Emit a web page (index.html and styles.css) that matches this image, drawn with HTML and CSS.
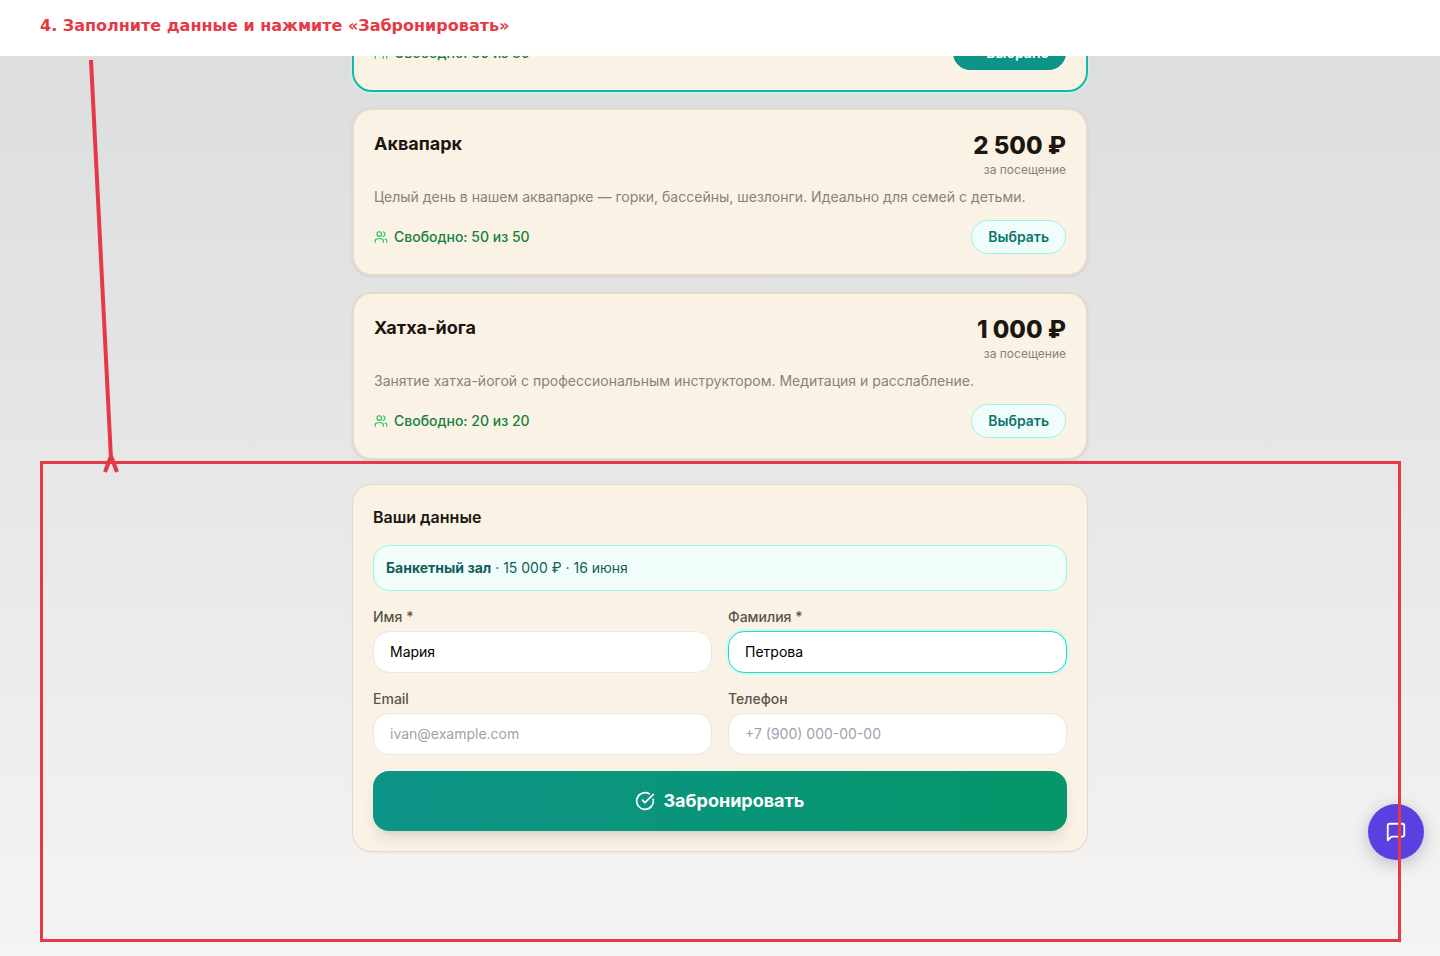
FILE: index.html
```html
<!DOCTYPE html>
<html lang="ru">
<head>
<meta charset="utf-8">
<meta name="viewport" content="width=device-width, initial-scale=1">
<title>Бронирование</title>
<link rel="stylesheet" href="styles.css">
</head>
<body>
<svg class="sprite" aria-hidden="true">
  <symbol id="users" viewBox="0 0 24 24"><path d="M16 21v-2a4 4 0 0 0-4-4H6a4 4 0 0 0-4 4v2"/><circle cx="9" cy="7" r="4"/><path d="M22 21v-2a4 4 0 0 0-3-3.87M16 3.13a4 4 0 0 1 0 7.75"/></symbol>
</svg>
<header class="step"><h1 class="step-title">4. Заполните данные и нажмите «Забронировать»</h1></header>
<main class="stage">
  <div class="content">
    <section class="services">
      <article class="card card-selected">
        <div class="card-foot">
          <span class="seats"><svg class="icon-sm"><use href="#users"/></svg>Свободно: 30 из 30</span>
          <button class="pick pick-active" type="button"><svg class="icon-xs" viewBox="0 0 24 24"><path d="M20 6 9 17l-5-5"/></svg>Выбрано</button>
        </div>
      </article>
      <article class="card">
        <div class="card-head">
          <h2 class="card-title">Аквапарк</h2>
          <div class="cost"><div class="price">2&nbsp;500 ₽</div><div class="unit">за посещение</div></div>
        </div>
        <p class="about">Целый день в нашем аквапарке — горки, бассейны, шезлонги. Идеально для семей с детьми.</p>
        <div class="card-foot">
          <span class="seats"><svg class="icon-sm"><use href="#users"/></svg>Свободно: 50 из 50</span>
          <button class="pick" type="button">Выбрать</button>
        </div>
      </article>
      <article class="card">
        <div class="card-head">
          <h2 class="card-title">Хатха-йога</h2>
          <div class="cost"><div class="price">1&nbsp;000 ₽</div><div class="unit">за посещение</div></div>
        </div>
        <p class="about">Занятие хатха-йогой с профессиональным инструктором. Медитация и расслабление.</p>
        <div class="card-foot">
          <span class="seats"><svg class="icon-sm"><use href="#users"/></svg>Свободно: 20 из 20</span>
          <button class="pick" type="button">Выбрать</button>
        </div>
      </article>
    </section>
    <form class="form">
      <h2 class="form-title">Ваши данные</h2>
      <p class="summary"><strong>Банкетный зал</strong> · 15&nbsp;000 ₽ · 16 июня</p>
      <div class="fields">
        <div class="field"><label for="name">Имя *</label><input id="name" type="text" value="Мария"></div>
        <div class="field"><label for="surname">Фамилия *</label><input id="surname" class="is-active" type="text" value="Петрова"></div>
        <div class="field"><label for="email">Email</label><input id="email" type="email" placeholder="ivan@example.com"></div>
        <div class="field"><label for="phone">Телефон</label><input id="phone" type="tel" placeholder="+7 (900) 000-00-00"></div>
      </div>
      <button class="submit" type="button"><svg class="icon-md" viewBox="0 0 24 24"><path d="M21.801 10A10 10 0 1 1 17 3.335"/><path d="m9 11 3 3L22 4"/></svg>Забронировать</button>
    </form>
  </div>
</main>
<button class="chat" type="button" aria-label="Чат"><svg class="icon-lg" viewBox="0 0 24 24"><path d="M21 15a2 2 0 0 1-2 2H7l-4 4V5a2 2 0 0 1 2-2h14a2 2 0 0 1 2 2z"/></svg></button>
<div class="highlight"></div>
<svg class="arrow" viewBox="0 0 40 420"><path d="M11 4 31 403M31 400 25 416M31 400 37 416"/></svg>
</body>
</html>
```
FILE: styles.css
```css
* { box-sizing: border-box; margin: 0; }
body {
  position: relative;
  display: flex;
  flex-direction: column;
  height: 100vh;
  overflow: hidden;
  background: #fff;
  color: #1c1611;
  font-family: Inter, "Noto Sans", sans-serif;
  font-size: 14px;
  line-height: 20px;
}
button, input { font: inherit; }
svg { fill: none; stroke: currentColor; stroke-width: 2; stroke-linecap: round; stroke-linejoin: round; flex: none; }
.sprite { position: absolute; width: 0; height: 0; }
.icon-xs { width: 12px; height: 12px; }
.icon-sm { width: 14px; height: 14px; }
.icon-md { width: 20px; height: 20px; }
.icon-lg { width: 22px; height: 22px; }

.step { flex: none; padding: 16px 40px 20px; }
.step-title { color: #e63946; font: 700 16px/20px "DejaVu Sans", sans-serif; }

.stage {
  flex: 1;
  min-height: 0;
  display: flex;
  flex-direction: column;
  justify-content: flex-end;
  overflow: hidden;
  padding: 0 16px 104px;
  background: linear-gradient(180deg, #dcdfde 0%, #e3e3e3 30%, #f5f4f2 100%);
}
.content { width: 100%; max-width: 736px; margin: 0 auto; }
.services { display: flex; flex-direction: column; gap: 16px; margin-bottom: 24px; }

.card {
  padding: 20px;
  border: 2px solid #e3dccd;
  border-radius: 20px;
  background: #faf3e5;
  box-shadow: 0 1px 3px rgba(0, 0, 0, .08);
}
.card-selected { border-color: #14b8a6; box-shadow: 0 1px 3px #ccfbf1; }
.card-head { display: flex; justify-content: space-between; margin-bottom: 8px; }
.card-title { font-size: 18px; line-height: 28px; font-weight: 700; }
.cost { text-align: right; }
.price { font-size: 24px; line-height: 32px; font-weight: 800; }
.unit { font-size: 12px; line-height: 16px; color: #8a8177; }
.about { margin-bottom: 12px; line-height: 22px; color: #8a8177; }
.card-foot { display: flex; align-items: center; justify-content: space-between; }
.seats { display: flex; align-items: center; gap: 6px; color: #15803d; font-weight: 500; }
.seats svg { color: #22c55e; }
.pick {
  display: flex;
  align-items: center;
  gap: 4px;
  padding: 6px 16px;
  border: 1px solid #99f6e4;
  border-radius: 17px;
  background: #f0fdfa;
  color: #0f766e;
  font-weight: 600;
}
.pick-active { border-color: #0d9488; background: #0d9488; color: #fff; }

.form {
  padding: 20px;
  border: 1px solid #e3dccd;
  border-radius: 20px;
  background: #faf3e5;
  box-shadow: 0 1px 2px rgba(0, 0, 0, .05);
}
.form-title { margin-bottom: 16px; font-size: 16px; line-height: 24px; font-weight: 600; }
.summary {
  margin-bottom: 16px;
  padding: 12px;
  border: 1px solid #99f6e4;
  border-radius: 16px;
  background: #f0fdfa;
  color: #115e59;
}
.fields { display: grid; grid-template-columns: 1fr 1fr; gap: 16px; margin-bottom: 16px; }
.field { display: flex; flex-direction: column; gap: 4px; }
.field label { color: #5c5349; font-weight: 500; }
.field input {
  width: 100%;
  padding: 10px 16px;
  border: 1px solid #e5e7eb;
  border-radius: 16px;
  outline: none;
  background: #fff;
  color: #000;
  line-height: 20px;
}
.field input::placeholder { color: #9ca3af; }
.field .is-active { border-color: #2dd4bf; box-shadow: 0 0 0 2px #ccfbf1; }
.submit {
  display: flex;
  align-items: center;
  justify-content: center;
  gap: 8px;
  width: 100%;
  padding: 16px;
  border: 0;
  border-radius: 16px;
  background: linear-gradient(90deg, #0d9488, #059669);
  box-shadow: 0 10px 15px -3px rgba(0, 0, 0, .1), 0 4px 6px -4px rgba(0, 0, 0, .1);
  color: #fff;
  font-size: 18px;
  line-height: 28px;
  font-weight: 700;
}

.chat {
  position: fixed;
  right: 16px;
  bottom: 96px;
  display: grid;
  place-items: center;
  width: 56px;
  height: 56px;
  padding: 0;
  border: 0;
  border-radius: 50%;
  background: #5b3fe0;
  box-shadow: 0 4px 16px rgba(40, 20, 120, .25);
  color: #fff;
}
.highlight { position: absolute; inset: 461px 39px 14px 40px; border: 3px solid #e63946; pointer-events: none; }
.arrow { position: absolute; left: 80px; top: 56px; width: 40px; height: 420px; stroke: #e63946; stroke-width: 4; stroke-linecap: butt; pointer-events: none; }
```
